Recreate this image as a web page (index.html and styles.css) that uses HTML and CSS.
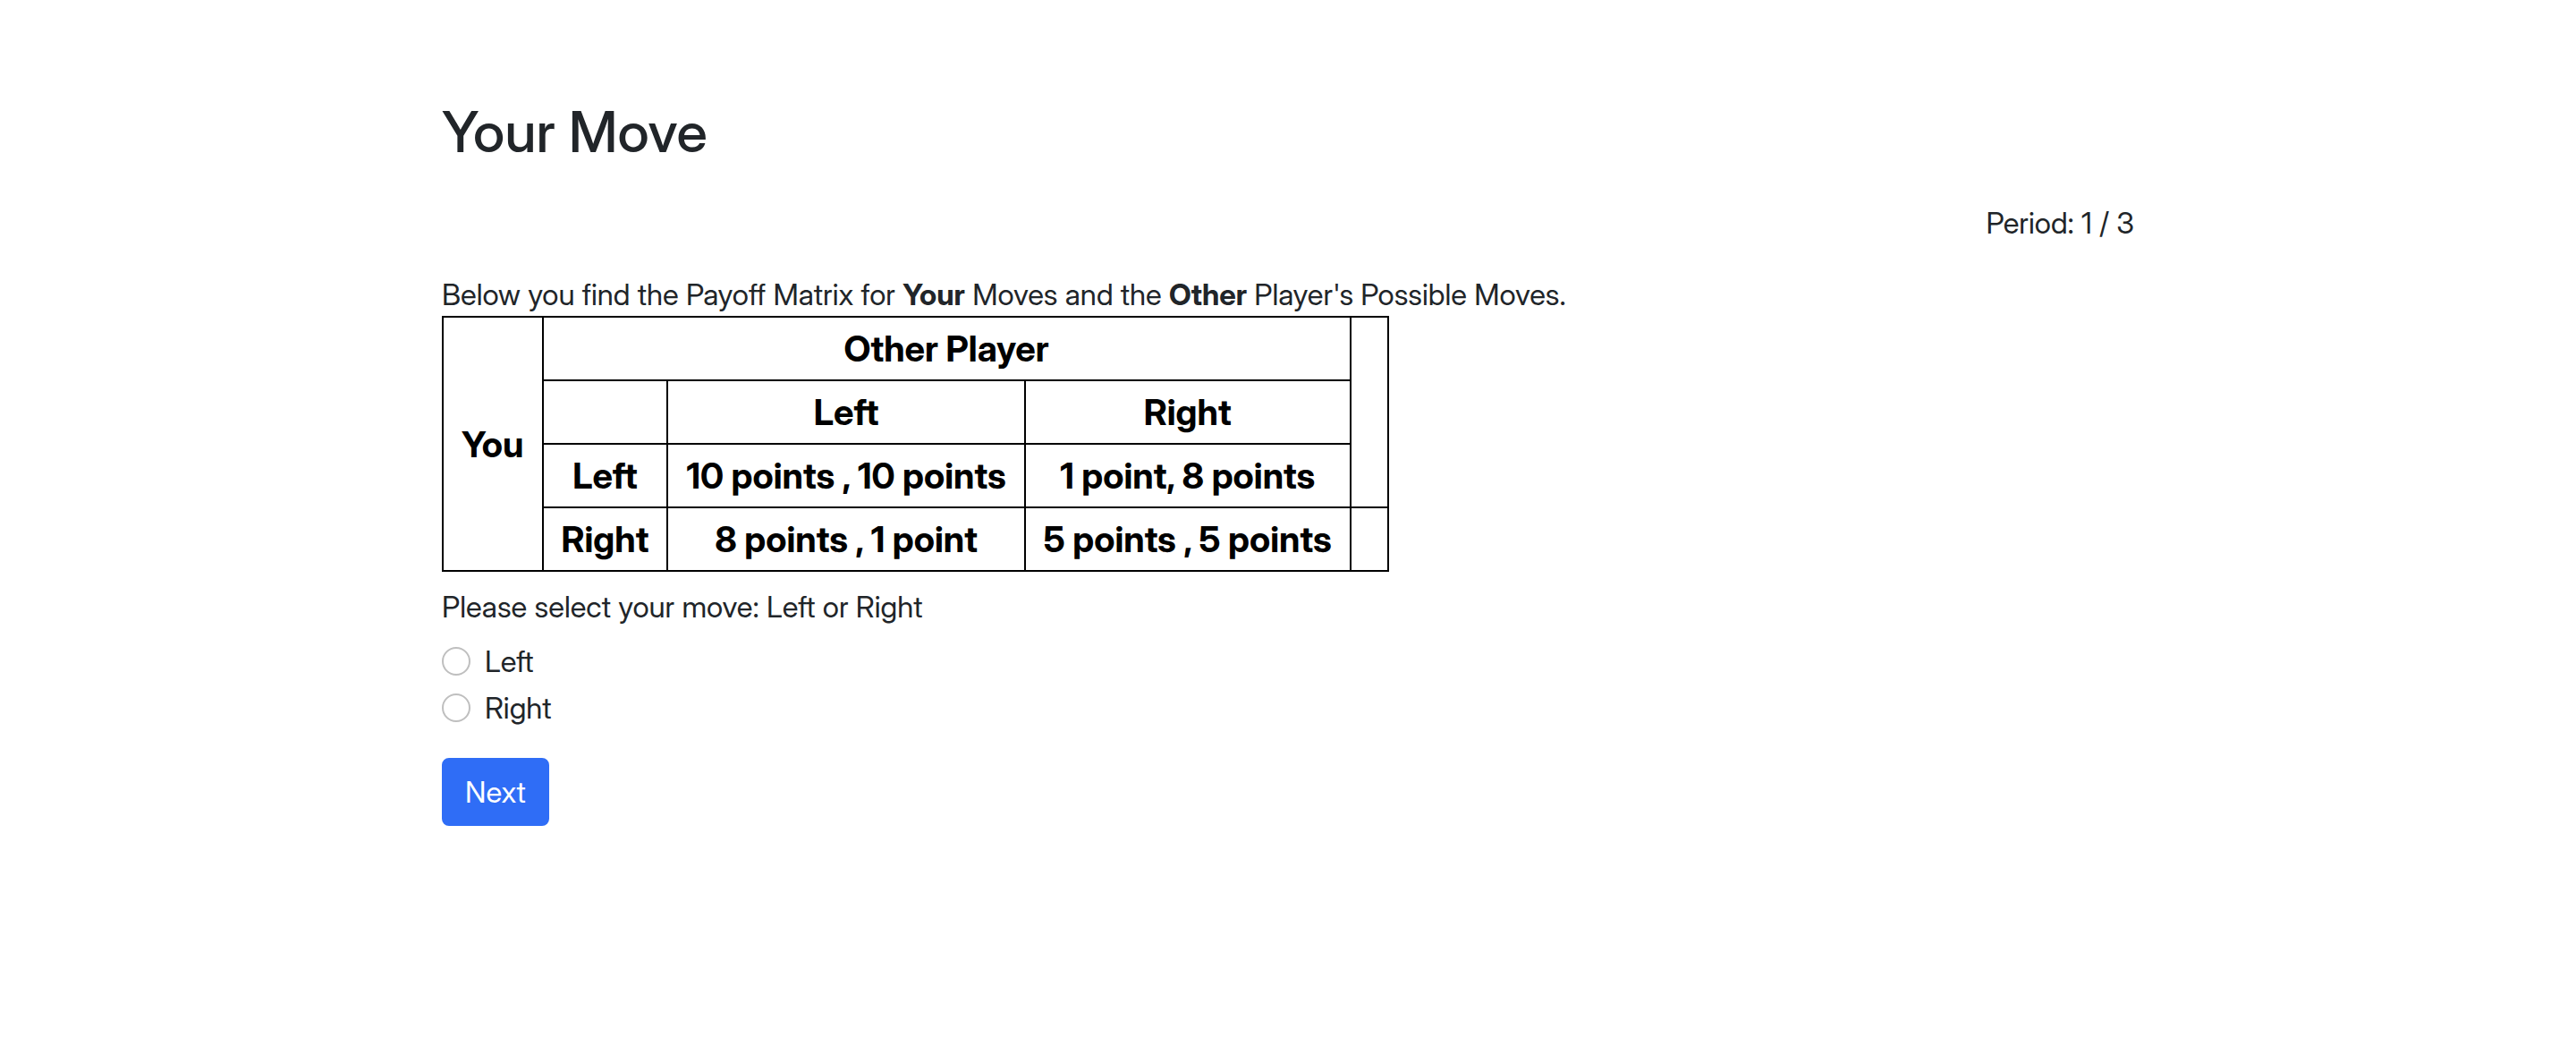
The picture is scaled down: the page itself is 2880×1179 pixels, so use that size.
FILE: index.html
```html
<!DOCTYPE html>
<html lang="en">
<head>
<meta charset="utf-8">
<title>Your Move</title>
<link rel="stylesheet" href="styles.css">
</head>
<body>
<main class="page">
  <h2 class="title">Your Move</h2>
  <p class="period">Period: 1 / 3</p>
  <form class="content">
    <p class="intro">Below you find the Payoff Matrix for <b>Your</b> Moves and the <b>Other</b> Player's Possible Moves.</p>
    <table class="matrix">
      <tr><th rowspan="4">You</th><th colspan="3">Other Player</th><th rowspan="3"></th></tr>
      <tr><th></th><th>Left</th><th>Right</th></tr>
      <tr><th>Left</th><th>10 points , 10 points</th><th>1 point, 8 points</th></tr>
      <tr><th>Right</th><th>8 points , 1 point</th><th>5 points , 5 points</th><th></th></tr>
    </table>
    <fieldset class="choices">
      <legend class="question">Please select your move: Left or Right</legend>
      <div class="choice"><input class="radio" type="radio" name="move" id="move-left" value="left"><label for="move-left">Left</label></div>
      <div class="choice"><input class="radio" type="radio" name="move" id="move-right" value="right"><label for="move-right">Right</label></div>
    </fieldset>
    <button class="next" type="button">Next</button>
  </form>
</main>
</body>
</html>
```
FILE: styles.css
```css
* { box-sizing: border-box; }
body {
  margin: 0;
  background: #fff;
  color: #212529;
  font: 33px/48px "Inter Display", Inter, "Liberation Sans", sans-serif;
}
.page {
  max-width: 1940px;
  margin: 0 auto;
  padding: 109px 24px 48px;
}
.title {
  margin: 0 0 40px;
  font-size: 63px;
  line-height: 76px;
  font-weight: 500;
}
.period { margin: 0 0 32px; text-align: right; }
.intro { margin: 0; }
.matrix {
  border-collapse: collapse;
  color: #000;
  font-size: 40px;
  line-height: 49px;
}
.matrix th {
  height: 71px;
  padding: 10px 20px;
  border: 2px solid #000;
  text-align: center;
  font-weight: 700;
  white-space: nowrap;
}
.choices { margin: 15px 0 28px; padding: 0; border: 0; }
.question { margin-bottom: 13px; padding: 0; }
.choice { display: flex; align-items: center; gap: 16px; margin-bottom: 4px; }
.radio {
  appearance: none;
  width: 32px;
  height: 32px;
  margin: 0;
  border: 2px solid #bfbfbf;
  border-radius: 50%;
  background: #fff;
}
.radio:checked { border: 10px solid #2f6df6; }
.next {
  padding: 12px 24px;
  border: 2px solid #2f6df6;
  border-radius: 8px;
  background: #2f6df6;
  color: #fff;
  font: inherit;
}
```
